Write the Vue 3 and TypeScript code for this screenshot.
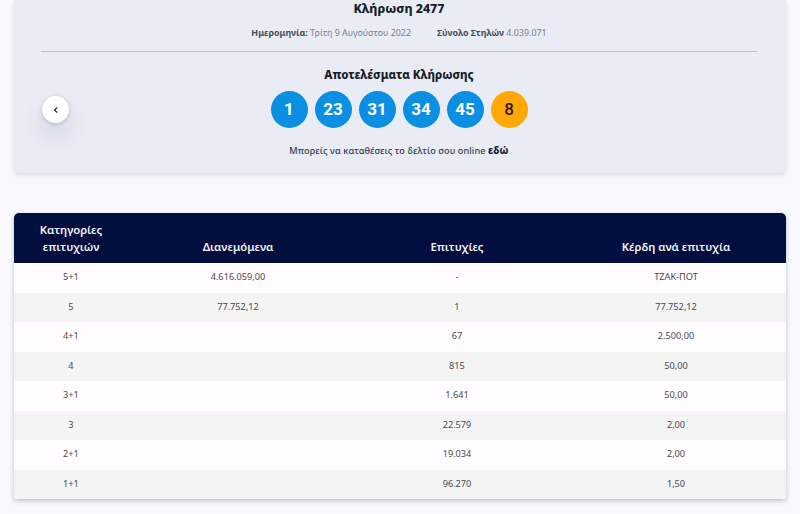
<script setup lang="ts">
const balls: number[] = [1, 23, 31, 34, 45]
const rows: string[][] = [
  ['5+1', '4.616.059,00', '-', 'ΤΖΑΚ-ΠΟΤ'],
  ['5', '77.752,12', '1', '77.752,12'],
  ['4+1', '', '67', '2.500,00'],
  ['4', '', '815', '50,00'],
  ['3+1', '', '1.641', '50,00'],
  ['3', '', '22.579', '2,00'],
  ['2+1', '', '19.034', '2,00'],
  ['1+1', '', '96.270', '1,50'],
]
</script>

<template>
  <main class="page">
    <section class="card">
      <h1 class="title">Κλήρωση 2477</h1>
      <div class="meta">
        <span><b>Ημερομηνία:</b> Τρίτη 9 Αυγούστου 2022</span>
        <span><b>Σύνολο Στηλών</b> 4.039.071</span>
      </div>
      <hr class="rule" />
      <h2 class="subtitle">Αποτελέσματα Κλήρωσης</h2>
      <div class="draw">
        <button class="back" aria-label="Προηγούμενη">
          <svg width="8" height="8" viewBox="0 0 8 8"><path d="M5.2 1.4 2.6 4l2.6 2.6" fill="none" stroke="#1c2333" stroke-width="1.2" /></svg>
        </button>
        <div class="balls">
          <span v-for="b in balls" :key="b" class="ball">{{ b }}</span>
          <span class="ball joker">8</span>
        </div>
      </div>
      <p class="note">Μπορείς να καταθέσεις το δελτίο σου online <b>εδώ</b></p>
    </section>

    <table class="results">
      <colgroup>
        <col class="c1" /><col class="c2" /><col class="c3" /><col class="c4" />
      </colgroup>
      <thead>
        <tr>
          <th>Κατηγορίες επιτυχιών</th>
          <th>Διανεμόμενα</th>
          <th>Επιτυχίες</th>
          <th>Κέρδη ανά επιτυχία</th>
        </tr>
      </thead>
      <tbody>
        <tr v-for="r in rows" :key="r[0]">
          <td v-for="(c, i) in r" :key="i">{{ c }}</td>
        </tr>
      </tbody>
    </table>
  </main>
</template>

<style>
html, body { margin: 0; background: #f9f9fd; }
</style>

<style scoped>
.page {
  width: 800px;
  height: 514px;
  overflow: hidden;
  box-sizing: border-box;
  padding: 0 14px;
  font-family: "Noto Sans", "Open Sans", sans-serif;
  color: #1c2333;
}
.card {
  height: 173px;
  box-sizing: border-box;
  background: #e9ecf5;
  border-radius: 0 0 4px 4px;
  box-shadow: 0 2px 5px rgba(60, 65, 90, 0.16);
  padding: 1px 29px 0 27px;
  text-align: center;
}
.title { margin: 0; font-size: 12.4px; line-height: 16px; font-weight: 800; color: #171c2a; }
.meta {
  margin-top: 10px;
  display: flex;
  justify-content: center;
  gap: 26px;
  font-size: 8.9px;
  line-height: 12px;
  color: #7b808c;
}
.meta b { color: #474c59; font-weight: 700; }
.rule { margin: 12px 0 0; border: 0; height: 1px; background: #bfc1c9; }
.subtitle { margin: 15px 0 0; font-size: 11.5px; line-height: 15px; font-weight: 800; color: #171c2a; }
.draw { position: relative; margin-top: 9px; }
.balls { display: flex; justify-content: center; gap: 7px; }
.ball {
  width: 37px;
  height: 37px;
  border-radius: 50%;
  background: #0a8fe3;
  color: #fff;
  font-family: Roboto, sans-serif;
  font-weight: 700;
  font-size: 17px;
  line-height: 37px;
}
.joker { background: #ffa806; color: #2b1a05; font-weight: 500; }
.back {
  position: absolute;
  left: 1px;
  top: 0;
  bottom: 0;
  margin: auto 0;
  width: 27px;
  height: 27px;
  padding: 0;
  border: 0;
  border-radius: 50%;
  background: #fff;
  display: flex;
  align-items: center;
  justify-content: center;
  box-shadow: 0 1px 4px rgba(40, 45, 70, 0.22), 0 14px 22px rgba(60, 65, 90, 0.14);
}
.note { margin: 16px 0 0; font-size: 9.1px; line-height: 12px; letter-spacing: 0.12px; font-weight: 500; color: #333846; }
.note b { font-weight: 800; color: #171c2a; font-size: 10px; }
.results {
  width: 772px;
  margin-top: 40px;
  border-collapse: separate;
  border-spacing: 0;
  table-layout: fixed;
  border-radius: 5px 5px 2px 2px;
  box-shadow: 0 2px 5px rgba(40, 45, 70, 0.28);
  background: #fffdff;
  overflow: hidden;
}
.c1 { width: 114px; }
.c2 { width: 220px; }
.c3 { width: 218px; }
.c4 { width: 220px; }
th {
  height: 50px;
  box-sizing: border-box;
  padding: 8px 20px 8px;
  vertical-align: bottom;
  background: #020f3e;
  color: #f2f3f7;
  font-size: 11.3px;
  line-height: 17px;
  font-weight: 600;
  text-align: center;
}
td {
  height: 29.5px;
  padding: 0 0 2px;
  box-sizing: border-box;
  font-size: 9.2px;
  color: #4a4a4e;
  text-align: center;
  vertical-align: middle;
}
tbody tr:nth-child(even) td { background: #f4f4f5; }
</style>
